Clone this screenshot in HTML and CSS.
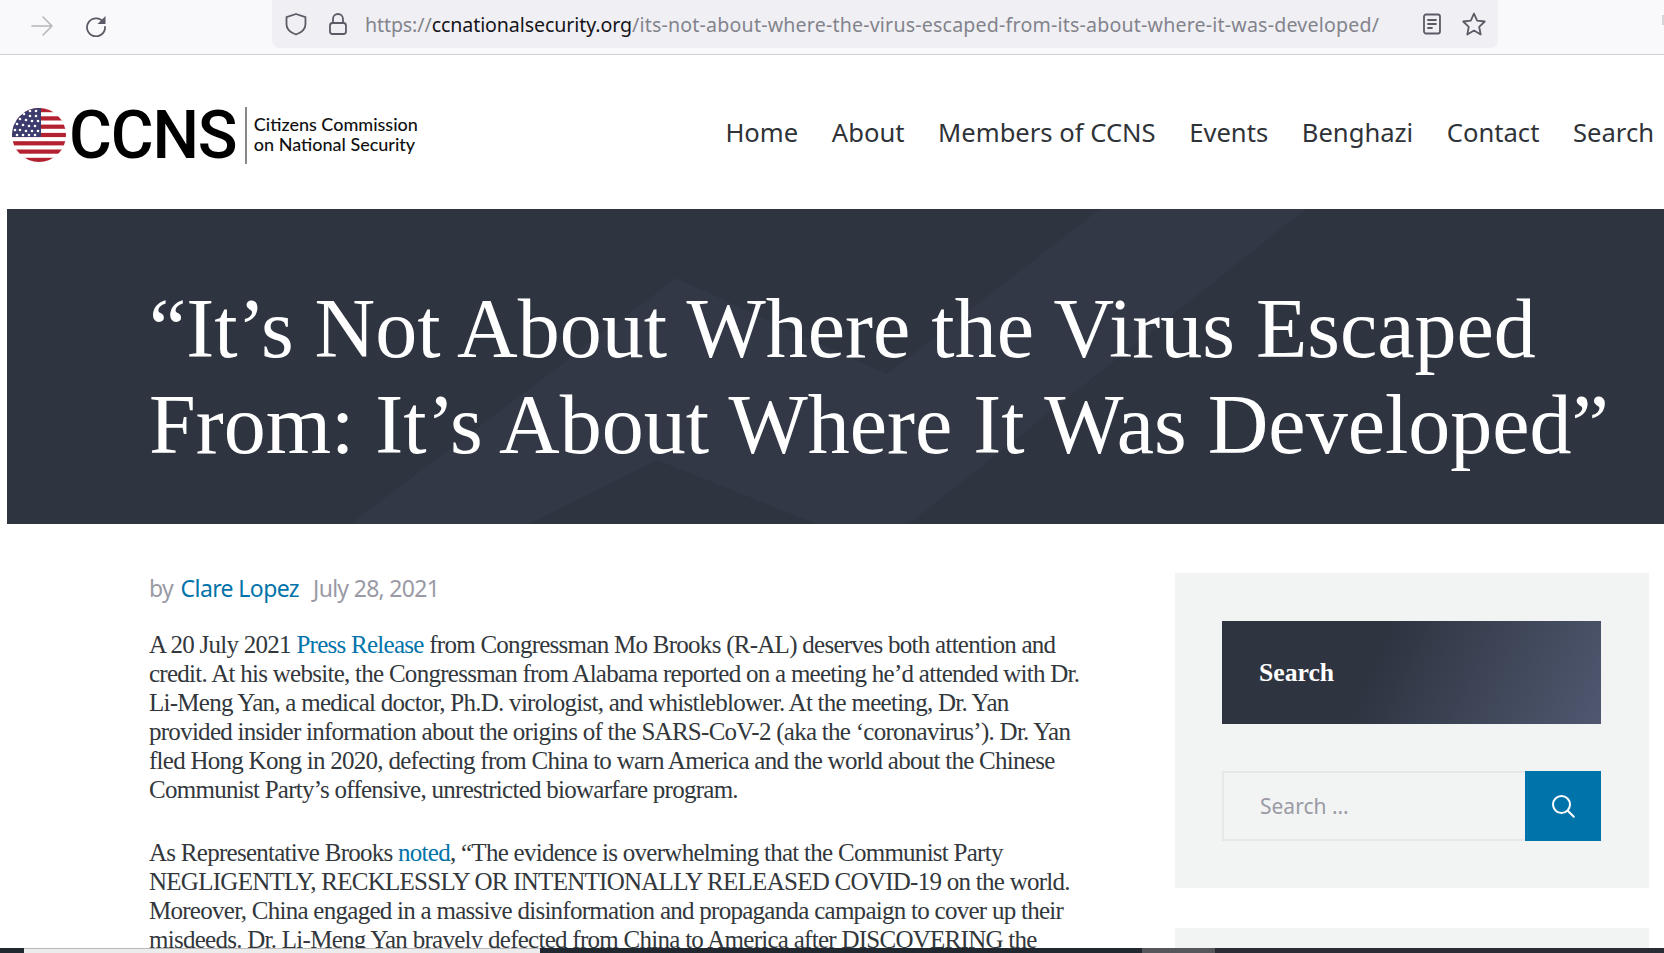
FILE: index.html
```html
<!DOCTYPE html>
<html lang="en">
<head>
<meta charset="utf-8">
<title>CCNS</title>
<link rel="stylesheet" href="styles.css">
</head>
<body>
<div class="page">
  <div class="toolbar">
    <svg class="tb-forward" width="24" height="24" viewBox="0 0 24 24" fill="none" stroke="#b5b5bb" stroke-width="1.5" stroke-linecap="round" stroke-linejoin="round"><path d="M2 12h20M13 3l9 9-9 9"/></svg>
    <svg class="tb-reload" width="24" height="24" viewBox="0 0 24 24" fill="none"><path d="M19.6 9.5A9 9 0 1 0 21 14" stroke="#5b5b66" stroke-width="1.8" stroke-linecap="round"/><path d="M21.5 3v8h-8z" fill="#5b5b66"/></svg>
    <div class="urlbar">
      <svg width="24" height="24" viewBox="0 0 24 24" fill="none" stroke="#5b5b66" stroke-width="1.8" stroke-linejoin="round"><path d="M12 2l9.500 3.200v7c0 5-4 8.300-9.500 10.300-5.500-2-9.500-5.300-9.500-10.300v-7z"/></svg>
      <svg class="lock" width="20" height="24" viewBox="0 0 20 24" fill="none" stroke="#5b5b66" stroke-width="1.8"><rect x="2" y="11" width="16" height="11" rx="2.500"/><path d="M5 11V7a5 5 0 0 1 10 0v4"/></svg>
      <div class="url"><span class="url-dim">https://</span><span class="url-host">ccnationalsecurity.org</span><span class="url-path">/its-not-about-where-the-virus-escaped-from-its-about-where-it-was-developed/</span></div>
      <svg class="reader" width="20" height="24" viewBox="0 0 20 24" fill="none" stroke="#5b5b66" stroke-width="1.800" stroke-linecap="round"><rect x="2" y="2.500" width="16" height="19" rx="2"/><path d="M6 8h8M6 12h8M6 16h4"/></svg>
      <svg class="star" width="26" height="26" viewBox="0 0 26 26" fill="none" stroke="#5b5b66" stroke-width="1.800" stroke-linejoin="round"><path d="M13 2.500l3.200 7.100 7.600.9-5.600 5.300 1.500 7.700-6.700-3.900-6.700 3.900 1.500-7.700-5.600-5.300 7.600-.9z"/></svg>
    </div>
    <span class="tb-edge"></span>
  </div>

  <header class="site-header">
    <div class="logo">
      <svg class="flag" width="54" height="54" viewBox="0 0 54 54">
        <defs><clipPath id="disc"><circle cx="27" cy="27" r="27"/></clipPath></defs>
        <g clip-path="url(#disc)">
          <rect width="54" height="54" fill="#fff"/>
          <g fill="#b3202f">
            <rect y="0" width="54" height="4.200"/><rect y="8.300" width="54" height="4.200"/><rect y="16.600" width="54" height="4.200"/><rect y="24.900" width="54" height="4.200"/><rect y="33.200" width="54" height="4.200"/><rect y="41.500" width="54" height="4.200"/><rect y="49.800" width="54" height="4.200"/>
          </g>
          <rect width="29" height="29" fill="#3c3b6e"/>
          <g fill="#fff">
            <circle cx="18" cy="3" r="1.300"/><circle cx="24" cy="3" r="1.300"/><circle cx="12" cy="6" r="1.300"/><circle cx="18" cy="8" r="1.300"/><circle cx="24" cy="8" r="1.300"/><circle cx="8" cy="11" r="1.300"/><circle cx="14" cy="12" r="1.300"/><circle cx="20" cy="13" r="1.300"/><circle cx="26" cy="13" r="1.300"/><circle cx="5" cy="16" r="1.300"/><circle cx="11" cy="17" r="1.300"/><circle cx="17" cy="18" r="1.300"/><circle cx="23" cy="18" r="1.300"/><circle cx="3" cy="22" r="1.300"/><circle cx="8" cy="22" r="1.300"/><circle cx="14" cy="23" r="1.300"/><circle cx="20" cy="23" r="1.300"/><circle cx="26" cy="23" r="1.300"/><circle cx="5" cy="27" r="1.300"/><circle cx="11" cy="27" r="1.300"/><circle cx="17" cy="27" r="1.300"/><circle cx="23" cy="27" r="1.300"/>
          </g>
        </g>
      </svg>
      <span class="logo-mark">CCNS</span>
      <span class="logo-rule"></span>
      <span class="logo-tag">Citizens Commission<br>on National Security</span>
    </div>
    <nav class="nav">
      <a>Home</a><a>About</a><a>Members of CCNS</a><a>Events</a><a>Benghazi</a><a>Contact</a><a>Search</a>
    </nav>
  </header>

  <section class="hero">
    <svg class="hero-bg" viewBox="0 0 1657 315" width="1657" height="315">
      <path d="M343 315L669 69 880 165 1093 0H1299L902 315H809L650 251 523 315z" fill="#323845"/>
    </svg>
    <h1 class="hero-title">“It’s Not About Where the Virus Escaped From: It’s About Where It Was Developed”</h1>
  </section>

  <div class="content">
    <main class="article">
      <div class="meta">by <a class="author">Clare Lopez</a><span class="date">July 28, 2021</span></div>
      <p>A 20 July 2021 <a>Press Release</a> from Congressman Mo Brooks (R-AL) deserves both attention and credit. At his website, the Congressman from Alabama reported on a meeting he’d attended with Dr. Li-Meng Yan, a medical doctor, Ph.D. virologist, and whistleblower. At the meeting, Dr. Yan provided insider information about the origins of the SARS-CoV-2 (aka the ‘coronavirus’). Dr. Yan fled Hong Kong in 2020, defecting from China to warn America and the world about the Chinese Communist Party’s offensive, unrestricted biowarfare program.</p>
      <p>As Representative Brooks <a>noted</a>, “The evidence is overwhelming that the Communist Party NEGLIGENTLY, RECKLESSLY OR INTENTIONALLY RELEASED COVID-19 on the world. Moreover, China engaged in a massive disinformation and propaganda campaign to cover up their misdeeds. Dr. Li-Meng Yan bravely defected from China to America after DISCOVERING the</p>
    </main>
    <aside class="sidebar">
      <div class="widget">
        <h2 class="widget-title">Search</h2>
        <div class="search">
          <div class="search-input">Search …</div>
          <div class="search-btn">
            <svg width="26" height="26" viewBox="0 0 26 26" fill="none" stroke="#fff" stroke-width="2" stroke-linecap="round"><circle cx="11.500" cy="11.500" r="8.500"/><path d="M17.800 17.800l6 6"/></svg>
          </div>
        </div>
      </div>
      <div class="widget widget-next"></div>
    </aside>
  </div>

  <div class="taskbar"><span class="tk-a"></span><span class="tk-b"></span><span class="tk-c"></span><span class="tk-d"></span><span class="tk-e"></span></div>
</div>
</body>
</html>
```
FILE: styles.css
```css
* { box-sizing: border-box; }
html, body { margin: 0; padding: 0; }
body { background: #fff; overflow: hidden; }
.page { position: relative; width: 1664px; height: 953px; overflow: hidden; }

.toolbar { height: 55px; background: #f9f9fb; border-bottom: 1px solid #cfcfd2; display: flex; align-items: flex-start; }
.tb-forward { margin: 14px 0 0 30px; flex: none; }
.tb-reload { margin: 13px 164px 0 30px; flex: none; }
.urlbar { width: 1226px; height: 48px; flex: none; background: #f0f0f4; border-radius: 0 0 8px 8px; display: flex; align-items: center; padding: 0 11px 0 12px; }
.lock { margin-left: 20px; }
.url { font: 400 19.6px "Noto Sans", sans-serif; margin-left: 17px; width: 1037px; white-space: nowrap; letter-spacing: -0.1px; }
.url-dim { color: #83838c; }
.url-host { color: #15141a; }
.url-path { color: #83838c; letter-spacing: .19px; }
.reader { margin-left: 22px; }
.star { margin-left: 19px; }
.tb-edge { width: 2px; height: 10px; margin: 15px 0 0 auto; background: #d5d5d8; }

.site-header { height: 154px; display: flex; align-items: center; justify-content: space-between; padding: 6px 10px 0 12px; }
.logo { display: flex; align-items: center; }
.flag { flex: none; }
.logo-mark { font: 500 67px/1 Roboto, sans-serif; color: #000; margin-left: 3px; letter-spacing: -1.2px; transform: scaleX(.98); transform-origin: left; }
.logo-rule { width: 2px; height: 57px; background: #888; margin-left: 5px; }
.logo-tag { font: 500 18px/20px Lato, sans-serif; color: #111; margin: -2px 0 0 7px; }
.nav { display: flex; gap: 33.6px; margin-top: -6px; }
.nav a { font: 400 25.6px "Noto Sans", sans-serif; color: #2f3338; }

.hero { position: relative; margin-left: 7px; height: 315px; background: #2e3440; padding: 72px 20px 0 142px; overflow: hidden; }
.hero-bg { position: absolute; left: 0; top: 0; }
.hero-title { position: relative; margin: 0; font: 400 84px/96px "Liberation Serif", serif; color: #fff; }

.content { display: flex; align-items: flex-start; padding-top: 49px; }
.article { width: 1175px; padding: 0 0 0 149px; }
.article p { width: 940px; margin: 0 0 34px; font: 400 25px/29px "Liberation Serif", serif; color: #32373c; letter-spacing: -.73px; }
.article a { color: #0073aa; }
.meta { font: 400 23px/30px "Noto Sans", sans-serif; color: #9a9aa5; letter-spacing: -.6px; margin-bottom: 26.5px; }
.author { margin-left: 2px; }
.date { margin-left: 14px; letter-spacing: -.7px; }
.sidebar { width: 474px; flex: none; }
.widget { background: #f2f4f4; padding: 48px 48px 48px 47px; height: 315px; }
.widget-next { margin-top: 40px; }
.widget-title { margin: 0 0 47px; height: 103px; display: flex; align-items: center; padding-left: 37px; background: linear-gradient(115deg, #2e3440 40%, #4f5870 100%); color: #fff; font: 700 25.7px "Liberation Serif", serif; }
.search { display: flex; height: 70px; }
.search-input { flex: 1; border: 2px solid #e6e8e8; border-right: 0; padding-left: 36px; display: flex; align-items: center; font: 400 21px "Noto Sans", sans-serif; color: #9a9aa5; }
.search-btn { width: 76px; background: #0073aa; display: flex; align-items: center; justify-content: center; }

.taskbar { position: absolute; left: 0; right: 0; bottom: 0; height: 5px; display: flex; }
.taskbar span { display: block; height: 100%; }
.tk-a { width: 24px; background: #20272e; }
.tk-b { width: 516px; background: #ececec; border-top: 1px solid #b9b9b9; }
.tk-c { width: 602px; background: #20272e; }
.tk-d { width: 73px; background: #55575c; }
.tk-e { flex: 1; background: #2a2c33; }
```
